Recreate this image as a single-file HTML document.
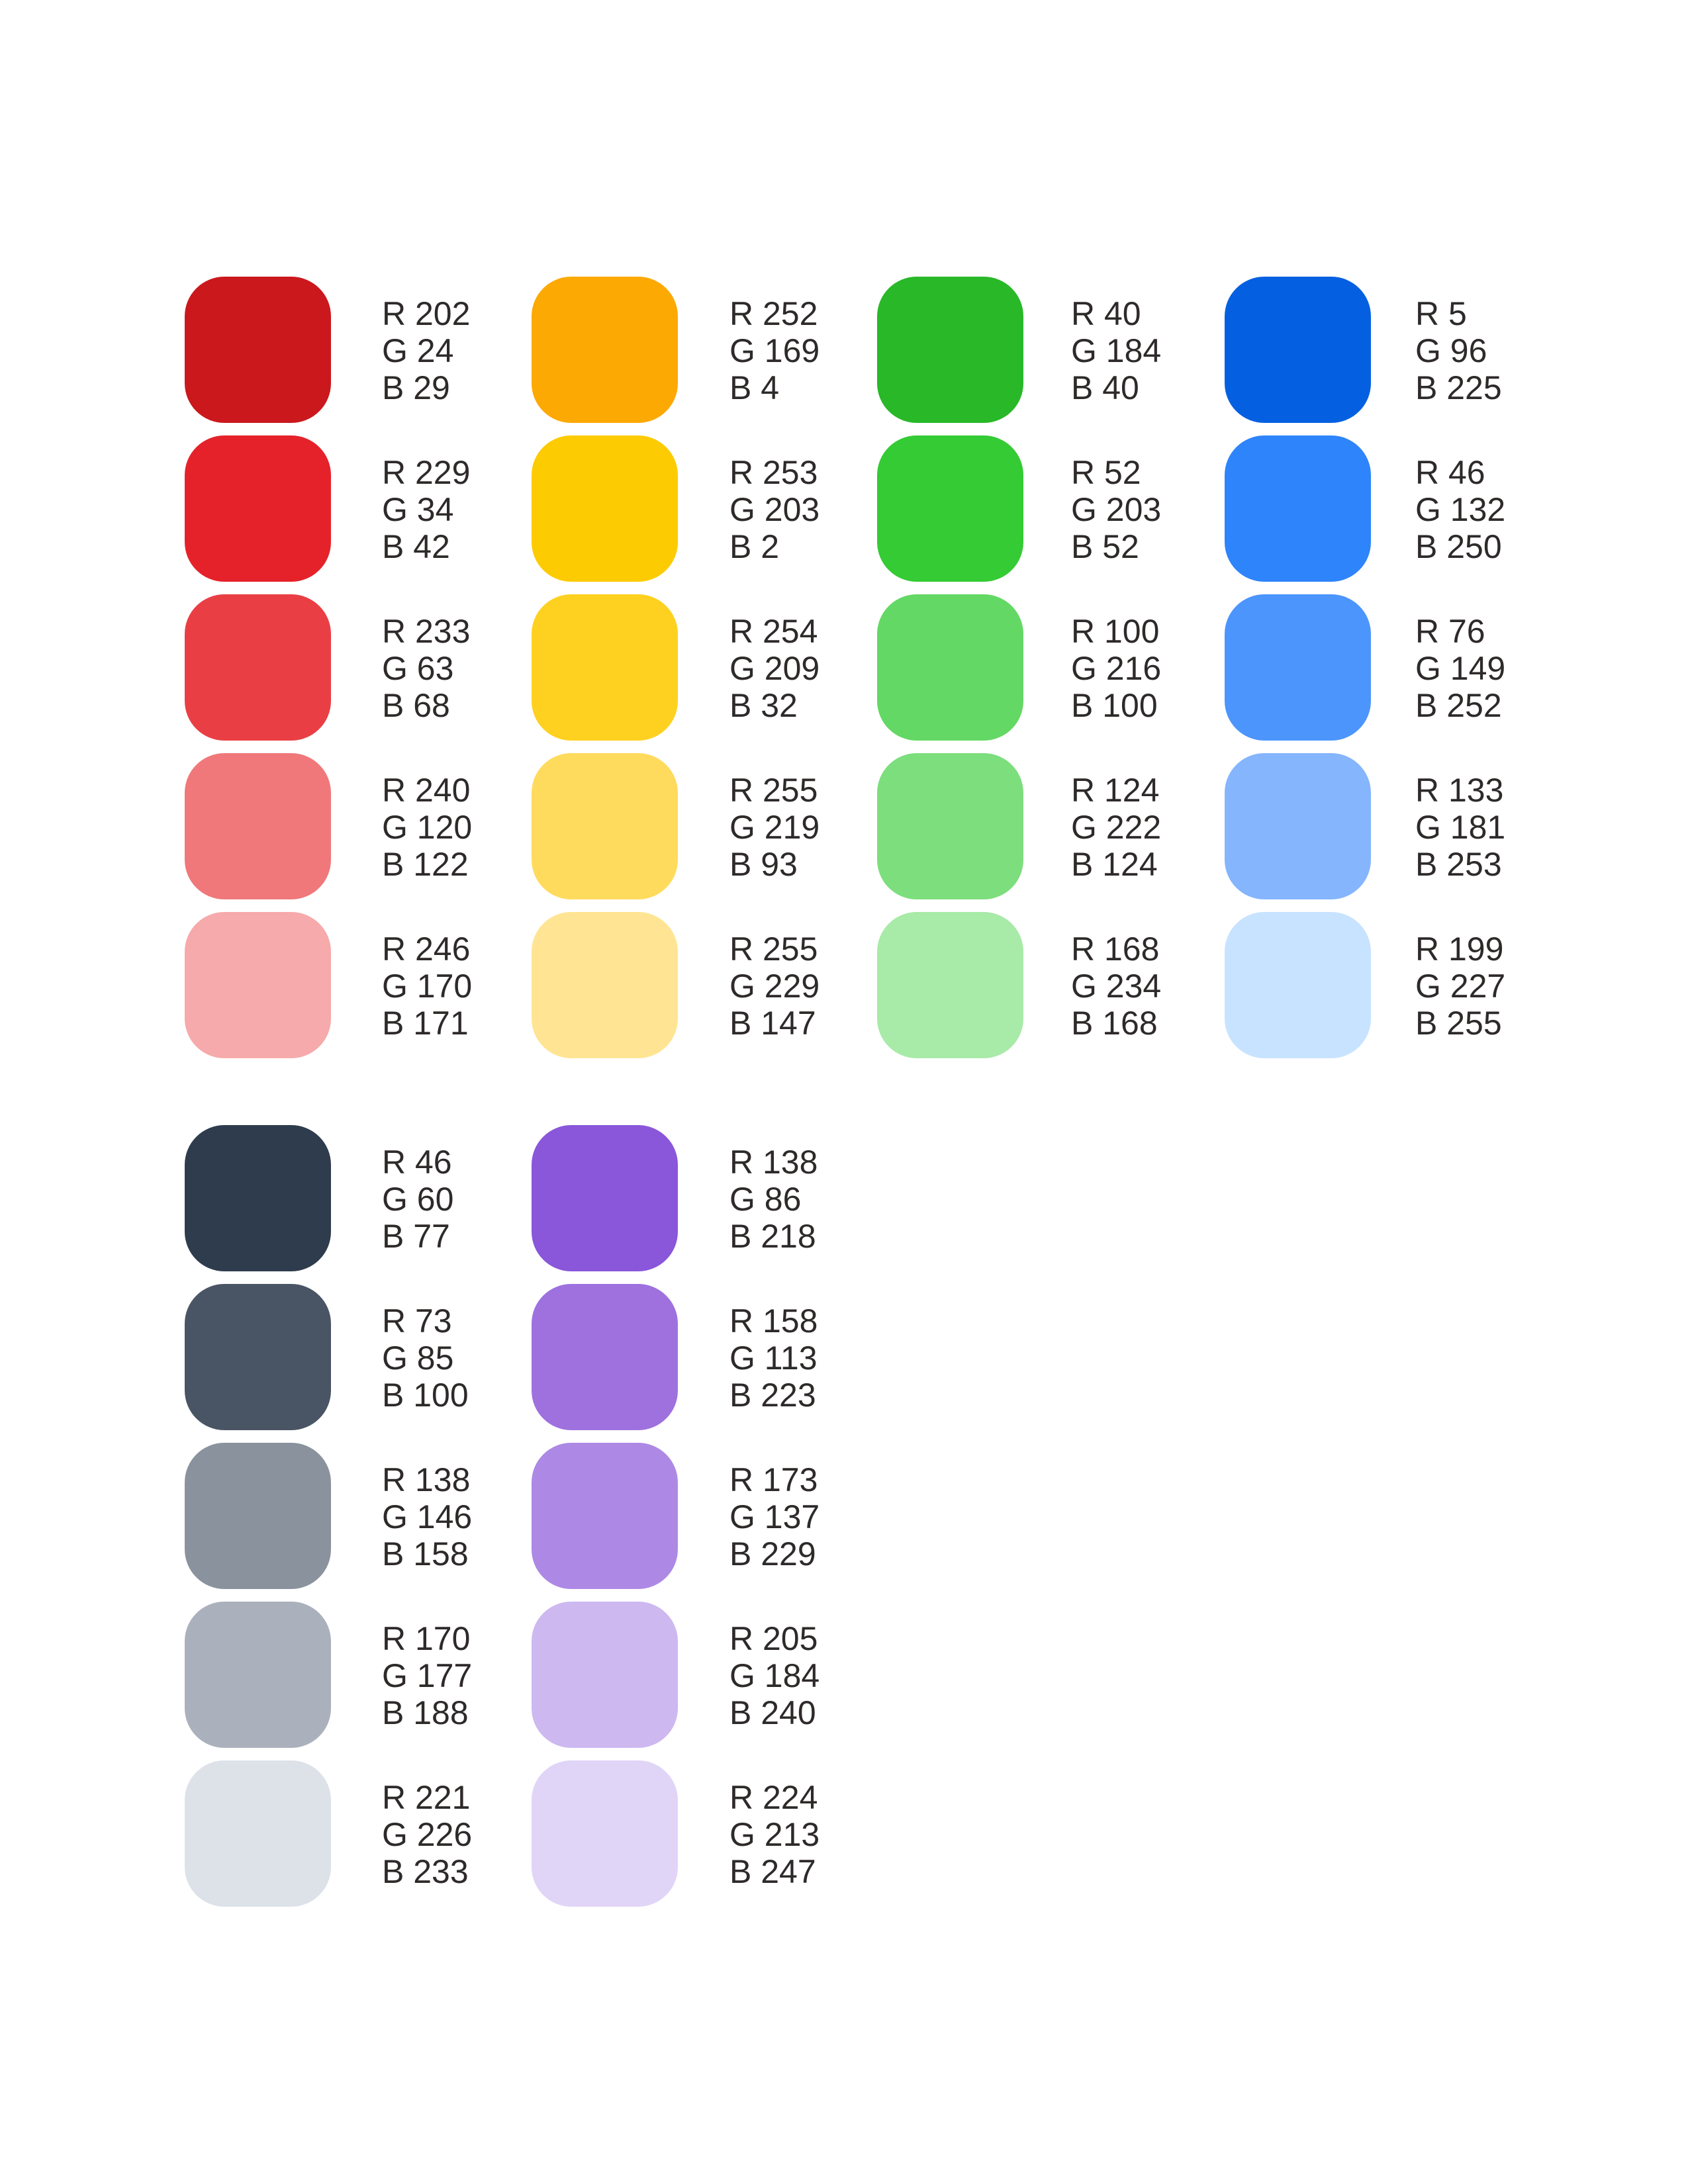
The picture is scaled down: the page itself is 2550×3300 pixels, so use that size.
<!DOCTYPE html>
<html><head><meta charset="utf-8"><style>
html,body{margin:0;padding:0;background:#fff;}
body{width:2550px;height:3300px;position:relative;overflow:hidden;font-family:"Liberation Sans",Arial,sans-serif;}
.s{position:absolute;width:221px;height:221px;border-radius:60px;}
.t{position:absolute;font-size:50px;line-height:56px;color:#2e2a2a;white-space:pre;}
</style></head><body>
<script>
const SX=[279,803,1325,1850], TX=[577,1102,1618,2138];
const groups=[
 {top:418,cols:[
  [[202,24,29],[229,34,42],[233,63,68],[240,120,122],[246,170,171]],
  [[252,169,4],[253,203,2],[254,209,32],[255,219,93],[255,229,147]],
  [[40,184,40],[52,203,52],[100,216,100],[124,222,124],[168,234,168]],
  [[5,96,225],[46,132,250],[76,149,252],[133,181,253],[199,227,255]]]},
 {top:1700,cols:[
  [[46,60,77],[73,85,100],[138,146,158],[170,177,188],[221,226,233]],
  [[138,86,218],[158,113,223],[173,137,229],[205,184,240],[224,213,247]]]}
];
let h='';
for(const g of groups){g.cols.forEach((col,i)=>{col.forEach((c,j)=>{const y=g.top+240*j;
h+=`<div class="s" style="left:${SX[i]}px;top:${y}px;background:rgb(${c[0]},${c[1]},${c[2]})"></div>`;
h+=`<div class="t" style="left:${TX[i]}px;top:${y+28}px">R ${c[0]}\nG ${c[1]}\nB ${c[2]}</div>`;});});}
document.body.innerHTML=h;
</script>
</body></html>
